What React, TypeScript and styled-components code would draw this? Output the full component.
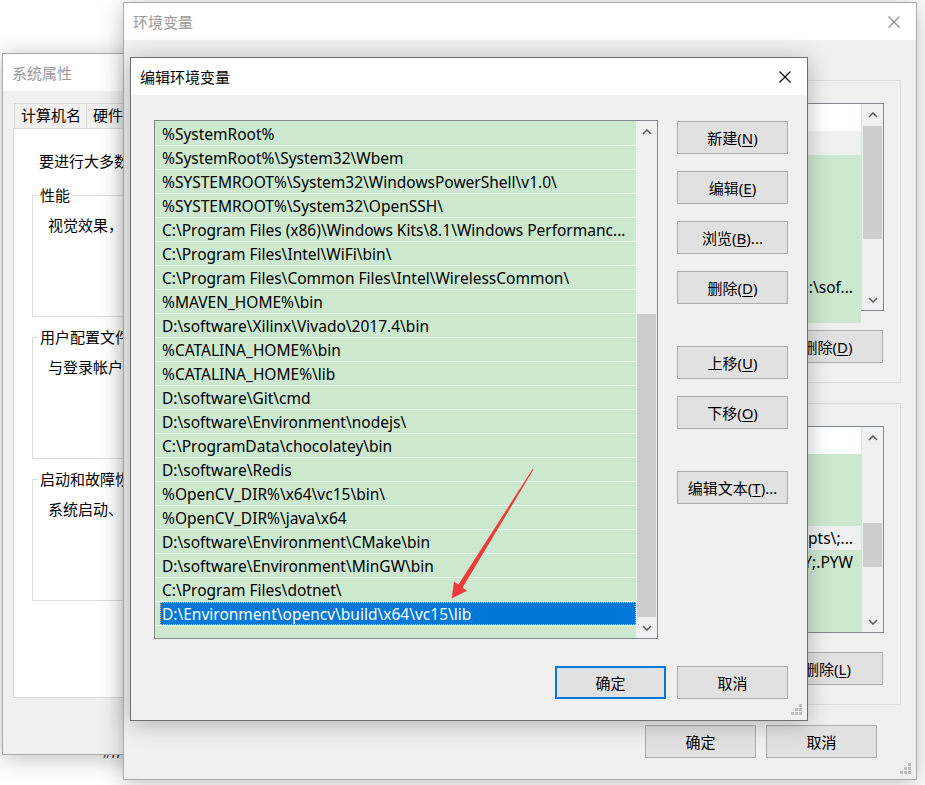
import React from 'react';
import styled, { createGlobalStyle, css } from 'styled-components';

const GlobalStyle = createGlobalStyle`
  html, body {
    margin: 0;
    padding: 0;
    background: #fff;
  }
  body {
    font-family: "Noto Sans", "Noto Sans CJK SC", sans-serif;
    font-size: 15px;
    color: #000;
  }
  * {
    box-sizing: border-box;
  }
`;

const Desktop = styled.div`
  position: relative;
  width: 925px;
  height: 785px;
  overflow: hidden;
  background: #fff;
`;

const DesktopLabel = styled.div`
  position: absolute;
  left: 102px;
  top: 742px;
  font-size: 15px;
  line-height: 20px;
  color: #333;
  font-style: italic;
`;

const Window = styled.div<{ $left: number; $top: number; $width: number; $height: number; $active?: boolean }>`
  position: absolute;
  left: ${p => p.$left}px;
  top: ${p => p.$top}px;
  width: ${p => p.$width}px;
  height: ${p => p.$height}px;
  display: flex;
  flex-direction: column;
  background: #f0f0f0;
  border: 1px solid ${p => (p.$active ? '#707070' : '#ababab')};
  box-shadow: 0 3px 22px rgba(0, 0, 0, 0.26);
`;

const TitleBar = styled.div<{ $active?: boolean }>`
  flex: none;
  height: 37px;
  background: #fff;
  display: flex;
  align-items: center;
  justify-content: space-between;
  padding-left: 9px;
  font-size: 15px;
  color: ${p => (p.$active ? '#000' : '#999')};
`;

const CloseButton = styled.div`
  width: 44px;
  height: 37px;
  display: flex;
  align-items: center;
  justify-content: center;
`;

const Grip = styled.svg`
  position: absolute;
  right: 4px;
  bottom: 4px;
`;

/* ---------- buttons ---------- */

const Button = styled.div<{ $default?: boolean; $mt?: number }>`
  flex: none;
  width: 111px;
  height: 33px;
  display: flex;
  align-items: center;
  justify-content: center;
  background: #e1e1e1;
  border: ${p => (p.$default ? '2px solid #0078d7' : '1px solid #adadad')};
  font-size: 15px;
  line-height: 20px;
  margin-top: ${p => p.$mt ?? 0}px;
  white-space: nowrap;

  u {
    text-decoration-thickness: 1px;
    text-underline-offset: 2px;
  }
`;

/* ---------- scrollbar ---------- */

const ScrollBar = styled.div`
  flex: none;
  width: 21px;
  padding: 0 1px;
  background: #f0f0f0;
  display: flex;
  flex-direction: column;
`;

const ScrollArrow = styled.div`
  flex: none;
  height: 21px;
  display: flex;
  align-items: center;
  justify-content: center;
`;

const ScrollTrack = styled.div`
  flex: 1;
  min-height: 0;
`;

const Thumb = styled.div<{ $top: number; $height: number }>`
  margin-top: ${p => p.$top}px;
  height: ${p => p.$height}px;
  background: #cdcdcd;
`;

const Chevron = ({ up }: { up?: boolean }) => (
  <svg width="10" height="6" viewBox="0 0 10 6">
    <path
      d={up ? 'M1 5 L5 1 L9 5' : 'M1 1 L5 5 L9 1'}
      fill="none"
      stroke="#606060"
      strokeWidth="1.6"
    />
  </svg>
);

const Scroll = ({ top, height }: { top: number; height: number }) => (
  <ScrollBar>
    <ScrollArrow>
      <Chevron up />
    </ScrollArrow>
    <ScrollTrack>
      <Thumb $top={top} $height={height} />
    </ScrollTrack>
    <ScrollArrow>
      <Chevron />
    </ScrollArrow>
  </ScrollBar>
);

const CloseIcon = ({ color }: { color: string }) => (
  <svg width="12" height="12" viewBox="0 0 12 12">
    <path d="M0.5 0.5 L11.5 11.5 M11.5 0.5 L0.5 11.5" stroke={color} strokeWidth="1.1" />
  </svg>
);

const GripIcon = () => (
  <Grip width="12" height="12" viewBox="0 0 12 12">
    {[
      [8, 0],
      [4, 4],
      [8, 4],
      [0, 8],
      [4, 8],
      [8, 8],
    ].map(([x, y]) => (
      <rect key={`${x}-${y}`} x={x} y={y} width="3" height="3" fill="#bdbdbd" />
    ))}
  </Grip>
);

/* ---------- group boxes ---------- */

const GroupBox = styled.fieldset<{ $height?: number; $mt?: number }>`
  margin: ${p => p.$mt ?? 0}px 0 0 0;
  padding: 0 0 0 5px;
  border: 1px solid #dcdcdc;
  min-width: 0;
  ${p =>
    p.$height &&
    css`
      height: ${p.$height}px;
    `}
`;

const Legend = styled.legend`
  padding: 0 2px;
  line-height: 20px;
  font-size: 15px;
  white-space: nowrap;
`;

/* ---------- 系统属性 ---------- */

const SysBody = styled.div`
  flex: 1;
  padding: 12px 0 0 10px;
  display: flex;
  flex-direction: column;
`;

const Tabs = styled.div`
  display: flex;
  height: 25px;
`;

const Tab = styled.div`
  height: 25px;
  padding: 0 5px 0 6px;
  margin-left: 1px;
  border: 1px solid #d9d9d9;
  border-bottom: none;
  background: #f0f0f0;
  line-height: 23px;
  white-space: nowrap;

  & + & {
    margin-left: -1px;
  }
`;

const TabPanel = styled.div`
  width: 420px;
  height: 570px;
  background: #fff;
  border: 1px solid #d9d9d9;
  padding: 22px 0 0 18px;
  display: flex;
  flex-direction: column;
  white-space: nowrap;
`;

const Intro = styled.div`
  line-height: 20px;
  padding-left: 7px;
`;

const SysGroup = styled(GroupBox)`
  width: 370px;
`;

const GroupText = styled.div`
  margin-top: 10px;
  padding-left: 10px;
  line-height: 20px;
`;

/* ---------- 环境变量 ---------- */

const EnvBody = styled.div`
  flex: 1;
  padding: 30px 15px 0;
  display: flex;
  flex-direction: column;
`;

const EnvGroup = styled(GroupBox)`
  padding: 0 16px 19px;
  display: flex;
  flex-direction: column;
`;

const EnvList = styled.div<{ $height: number }>`
  margin-top: 13px;
  height: ${p => p.$height}px;
  border: 1px solid #828790;
  background: #cce8cf;
  display: flex;
  font-size: 15.5px;
`;

const EnvRows = styled.div`
  flex: 1;
  min-width: 0;
  display: flex;
  flex-direction: column;
  margin-right: 1px;
`;

const EnvHeader = styled.div`
  flex: none;
  height: 27px;
  background: #fff;
  display: flex;
  align-items: center;
  line-height: 20px;
`;

const EnvRow = styled.div<{ $selected?: boolean }>`
  flex: none;
  height: 24px;
  display: flex;
  align-items: center;
  line-height: 23px;
  background: ${p => (p.$selected ? '#f0f0f0' : '#cce8cf')};
  white-space: nowrap;
`;

const NameCell = styled.div`
  flex: none;
  width: 170px;
  padding-left: 7px;
  overflow: hidden;
`;

const ValueCell = styled.div<{ $long?: boolean }>`
  flex: 1;
  min-width: 0;
  overflow: hidden;
  display: flex;
  justify-content: ${p => (p.$long ? 'flex-end' : 'flex-start')};
  padding: 0 8px 0 7px;
`;

const ButtonRow = styled.div<{ $mt: number; $pr?: number }>`
  display: flex;
  justify-content: flex-end;
  gap: 10px;
  margin-top: ${p => p.$mt}px;
  padding-right: ${p => p.$pr ?? 1}px;
`;

/* ---------- 编辑环境变量 ---------- */

const EditBody = styled.div`
  flex: 1;
  padding: 25px 19px 0 23px;
  display: flex;
  flex-direction: column;
`;

const EditMain = styled.div`
  display: flex;
  gap: 19px;
`;

const PathList = styled.div`
  width: 504px;
  height: 519px;
  border: 1px solid #828790;
  background: #cce8cf;
  display: flex;
  font-size: 15.5px;
`;

const PathRows = styled.div`
  flex: 1;
  min-width: 0;
  padding-top: 1px;
  overflow: hidden;
  display: flex;
  flex-direction: column;
`;

const PathRow = styled.div<{ $selected?: boolean }>`
  flex: none;
  height: 24px;
  border-bottom: 1px solid #e9f5eb;
  display: flex;
  align-items: stretch;
  padding-left: ${p => (p.$selected ? 5 : 7)}px;
  white-space: nowrap;
  overflow: hidden;
  line-height: 24px;
`;

const SelectedText = styled.div`
  flex: 1;
  background: #0078d7;
  color: #fff;
  padding-left: 2px;
  outline: 1px dotted #f5b46a;
  outline-offset: -1px;
`;

const ButtonColumn = styled.div`
  display: flex;
  flex-direction: column;
  padding-top: 1px;
`;

const Footer = styled.div`
  display: flex;
  justify-content: flex-end;
  gap: 11px;
  margin-top: 27px;
`;

const ArrowOverlay = styled.svg`
  position: absolute;
  left: 0;
  top: 0;
  pointer-events: none;
`;

const paths = [
  '%SystemRoot%',
  '%SystemRoot%\\System32\\Wbem',
  '%SYSTEMROOT%\\System32\\WindowsPowerShell\\v1.0\\',
  '%SYSTEMROOT%\\System32\\OpenSSH\\',
  'C:\\Program Files (x86)\\Windows Kits\\8.1\\Windows Performanc...',
  'C:\\Program Files\\Intel\\WiFi\\bin\\',
  'C:\\Program Files\\Common Files\\Intel\\WirelessCommon\\',
  '%MAVEN_HOME%\\bin',
  'D:\\software\\Xilinx\\Vivado\\2017.4\\bin',
  '%CATALINA_HOME%\\bin',
  '%CATALINA_HOME%\\lib',
  'D:\\software\\Git\\cmd',
  'D:\\software\\Environment\\nodejs\\',
  'C:\\ProgramData\\chocolatey\\bin',
  'D:\\software\\Redis',
  '%OpenCV_DIR%\\x64\\vc15\\bin\\',
  '%OpenCV_DIR%\\java\\x64',
  'D:\\software\\Environment\\CMake\\bin',
  'D:\\software\\Environment\\MinGW\\bin',
  'C:\\Program Files\\dotnet\\',
  'D:\\Environment\\opencv\\build\\x64\\vc15\\lib',
];

type EnvVar = { name: string; value: string; long?: boolean; selected?: boolean };

const userVars: EnvVar[] = [
  { name: 'CATALINA_HOME', value: 'D:\\software\\apache-tomcat-9.0.12', selected: true },
  { name: 'ChocolateyLastPathUpdate', value: '132038937893847563' },
  { name: 'JAVA_HOME', value: 'C:\\Program Files\\Java\\jdk1.8.0_181' },
  { name: 'MAVEN_HOME', value: 'D:\\software\\apache-maven-3.5.4' },
  { name: 'OneDrive', value: 'C:\\Users\\Administrator\\OneDrive' },
  { name: 'OpenCV_DIR', value: 'D:\\Environment\\opencv\\build' },
  {
    name: 'Path',
    value: 'C:\\Users\\Administrator\\AppData\\Local\\Microsoft\\WindowsApps;%JAVA_HOME%\\bin;D:\\sof...',
    long: true,
  },
  { name: 'TEMP', value: '%USERPROFILE%\\AppData\\Local\\Temp' },
];

const systemVars: EnvVar[] = [
  { name: 'MAVEN_HOME', value: 'D:\\software\\apache-maven-3.5.4' },
  { name: 'NUMBER_OF_PROCESSORS', value: '8' },
  { name: 'OS', value: 'Windows_NT' },
  {
    name: 'Path',
    value: 'C:\\ProgramData\\Oracle\\Java\\javapath;C:\\Python27\\;C:\\Python27\\Scripts\\;...',
    long: true,
    selected: true,
  },
  {
    name: 'PATHEXT',
    value: '.COM;.EXE;.BAT;.CMD;.VBS;.VBE;.JS;.JSE;.WSF;.WSH;.MSC;.PY;.PYW',
    long: true,
  },
  { name: 'PROCESSOR_ARCHITECTURE', value: 'AMD64' },
  { name: 'PROCESSOR_IDENTIFIER', value: 'Intel64 Family 6 Model 142' },
];

const EnvTable = ({
  rows,
  height,
  thumbTop,
  thumbHeight,
}: {
  rows: EnvVar[];
  height: number;
  thumbTop: number;
  thumbHeight: number;
}) => (
  <EnvList $height={height}>
    <EnvRows>
      <EnvHeader>
        <NameCell>变量</NameCell>
        <ValueCell>值</ValueCell>
      </EnvHeader>
      {rows.map(r => (
        <EnvRow key={r.name + r.value} $selected={r.selected}>
          <NameCell>{r.name}</NameCell>
          <ValueCell $long={r.long}>{r.value}</ValueCell>
        </EnvRow>
      ))}
    </EnvRows>
    <Scroll top={thumbTop} height={thumbHeight} />
  </EnvList>
);

export default function App() {
  return (
    <Desktop>
      <GlobalStyle />
      <DesktopLabel>#n</DesktopLabel>

      <Window $left={2} $top={53} $width={440} $height={702}>
        <TitleBar>系统属性</TitleBar>
        <SysBody>
          <Tabs>
            <Tab>计算机名</Tab>
            <Tab>硬件</Tab>
            <Tab>高级</Tab>
            <Tab>系统保护</Tab>
          </Tabs>
          <TabPanel>
            <Intro>要进行大多数更改，你必须作为管理员登录。</Intro>
            <SysGroup $height={132} $mt={14}>
              <Legend>性能</Legend>
              <GroupText>视觉效果，处理器计划，内存使用，以及虚拟内存</GroupText>
            </SysGroup>
            <SysGroup $height={132} $mt={10}>
              <Legend>用户配置文件</Legend>
              <GroupText>与登录帐户相关的桌面设置</GroupText>
            </SysGroup>
            <SysGroup $height={132} $mt={10}>
              <Legend>启动和故障恢复</Legend>
              <GroupText>系统启动、系统故障和调试信息</GroupText>
            </SysGroup>
          </TabPanel>
        </SysBody>
      </Window>

      <Window $left={123} $top={2} $width={794} $height={778}>
        <TitleBar>
          环境变量
          <CloseButton>
            <CloseIcon color="#8a8a8a" />
          </CloseButton>
        </TitleBar>
        <EnvBody>
          <EnvGroup>
            <Legend>Administrator 的用户变量(U)</Legend>
            <EnvTable rows={userVars} height={208} thumbTop={1} thumbHeight={113} />
            <ButtonRow $mt={19}>
              <Button>
                新建(<u>N</u>)...
              </Button>
              <Button>
                编辑(<u>E</u>)...
              </Button>
              <Button>
                删除(<u>D</u>)
              </Button>
            </ButtonRow>
          </EnvGroup>
          <EnvGroup $mt={10}>
            <Legend>系统变量(S)</Legend>
            <EnvTable rows={systemVars} height={207} thumbTop={75} thumbHeight={44} />
            <ButtonRow $mt={19}>
              <Button>
                新建(<u>W</u>)...
              </Button>
              <Button>
                编辑(<u>I</u>)...
              </Button>
              <Button>
                删除(<u>L</u>)
              </Button>
            </ButtonRow>
          </EnvGroup>
          <ButtonRow $mt={20} $pr={24}>
            <Button>确定</Button>
            <Button>取消</Button>
          </ButtonRow>
        </EnvBody>
        <GripIcon />
      </Window>

      <Window $left={130} $top={57} $width={678} $height={664} $active>
        <TitleBar $active>
          编辑环境变量
          <CloseButton>
            <CloseIcon color="#000" />
          </CloseButton>
        </TitleBar>
        <EditBody>
          <EditMain>
            <PathList>
              <PathRows>
                {paths.map((p, i) =>
                  i === paths.length - 1 ? (
                    <PathRow key={p} $selected>
                      <SelectedText>{p}</SelectedText>
                    </PathRow>
                  ) : (
                    <PathRow key={p}>{p}</PathRow>
                  ),
                )}
              </PathRows>
              <Scroll top={172} height={303} />
            </PathList>
            <ButtonColumn>
              <Button>
                新建(<u>N</u>)
              </Button>
              <Button $mt={17}>
                编辑(<u>E</u>)
              </Button>
              <Button $mt={17}>
                浏览(<u>B</u>)...
              </Button>
              <Button $mt={17}>
                删除(<u>D</u>)
              </Button>
              <Button $mt={42}>
                上移(<u>U</u>)
              </Button>
              <Button $mt={17}>
                下移(<u>O</u>)
              </Button>
              <Button $mt={42}>
                编辑文本(<u>T</u>)...
              </Button>
            </ButtonColumn>
          </EditMain>
          <Footer>
            <Button $default>确定</Button>
            <Button>取消</Button>
          </Footer>
        </EditBody>
        <GripIcon />
      </Window>

      <ArrowOverlay width="925" height="785" viewBox="0 0 925 785">
        <polygon
          points="533.5,469.5 462.6,587.6 467,590.8 451.7,598.6 454,581.5 458.4,584.6 532.6,469"
          fill="#f23c3c"
        />
      </ArrowOverlay>
    </Desktop>
  );
}
